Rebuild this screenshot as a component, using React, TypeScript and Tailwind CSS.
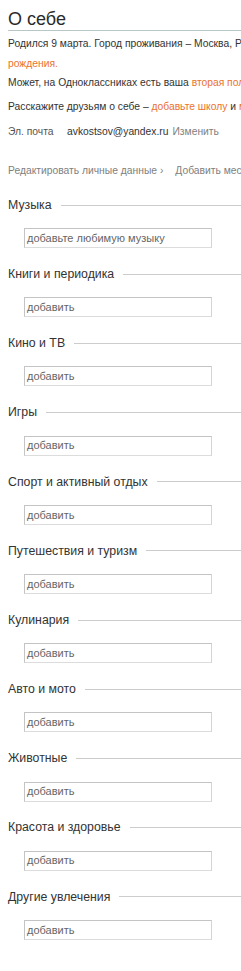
import React from "react";

const sections: { label: string; placeholder: string }[] = [
  { label: "Музыка", placeholder: "добавьте любимую музыку" },
  { label: "Книги и периодика", placeholder: "добавить" },
  { label: "Кино и ТВ", placeholder: "добавить" },
  { label: "Игры", placeholder: "добавить" },
  { label: "Спорт и активный отдых", placeholder: "добавить" },
  { label: "Путешествия и туризм", placeholder: "добавить" },
  { label: "Кулинария", placeholder: "добавить" },
  { label: "Авто и мото", placeholder: "добавить" },
  { label: "Животные", placeholder: "добавить" },
  { label: "Красота и здоровье", placeholder: "добавить" },
  { label: "Другие увлечения", placeholder: "добавить" },
];

export default function App() {
  return (
    <div
      className="w-[241px] h-[971px] overflow-hidden bg-white text-[#333]"
      style={{ fontFamily: '"Liberation Sans", Arial, sans-serif' }}
    >
      <div className="pl-2 pt-[8px]">
        <div className="text-[18px] leading-[22px] text-[#2a2a2a] border-b border-[#b9c6c6] whitespace-nowrap">
          О себе
        </div>
        <div className="text-[10.3px] whitespace-nowrap">
          <div className="mt-[3px] leading-[20px]">
            <div>Родился 9 марта. Город проживания – Москва, Россия</div>
            <div className="text-[#eb722e]">рождения.</div>
          </div>
          <div className="leading-[18px]">
            Может, на Одноклассниках есть ваша <span className="text-[#eb722e]">вторая половинка</span>
          </div>
          <div className="mt-[6px] leading-[18px]">
            Расскажите друзьям о себе – <span className="text-[#eb722e]">добавьте школу</span> и{" "}
            <span className="text-[#eb722e]">место работы</span>
          </div>
          <div className="mt-[7px] leading-[18px] flex">
            <span className="w-[59px] text-[#555]">Эл. почта</span>
            <span className="text-[#333]">avkostsov@yandex.ru</span>
            <span className="ml-[4px] text-[#808080]">Изменить</span>
          </div>
          <div className="mt-[21px] leading-[18px] flex text-[#808080]">
            <span>Редактировать личные данные ›</span>
            <span className="ml-[12px]">Добавить место</span>
          </div>
        </div>
      </div>
      <div className="mt-[16px] flex flex-col">
        {sections.map((s) => (
          <div key={s.label} className="h-[69.2px] shrink-0">
            <div className="flex items-center pl-2 h-[18px]">
              <span className="text-[12.3px] text-[#333] whitespace-nowrap">{s.label}</span>
              <div className="flex-1 ml-[9px] h-px bg-[#cccccc]" />
            </div>
            <div className="pl-[24px] mt-[14px]">
              <div className="w-[188px] h-[20px] border border-[#c4c4c4] border-b-[#dcdcdc] border-r-[#d4d4d4] pl-[2px] flex items-center text-[11px] text-[#666] whitespace-nowrap">
                {s.placeholder}
              </div>
            </div>
          </div>
        ))}
      </div>
    </div>
  );
}
